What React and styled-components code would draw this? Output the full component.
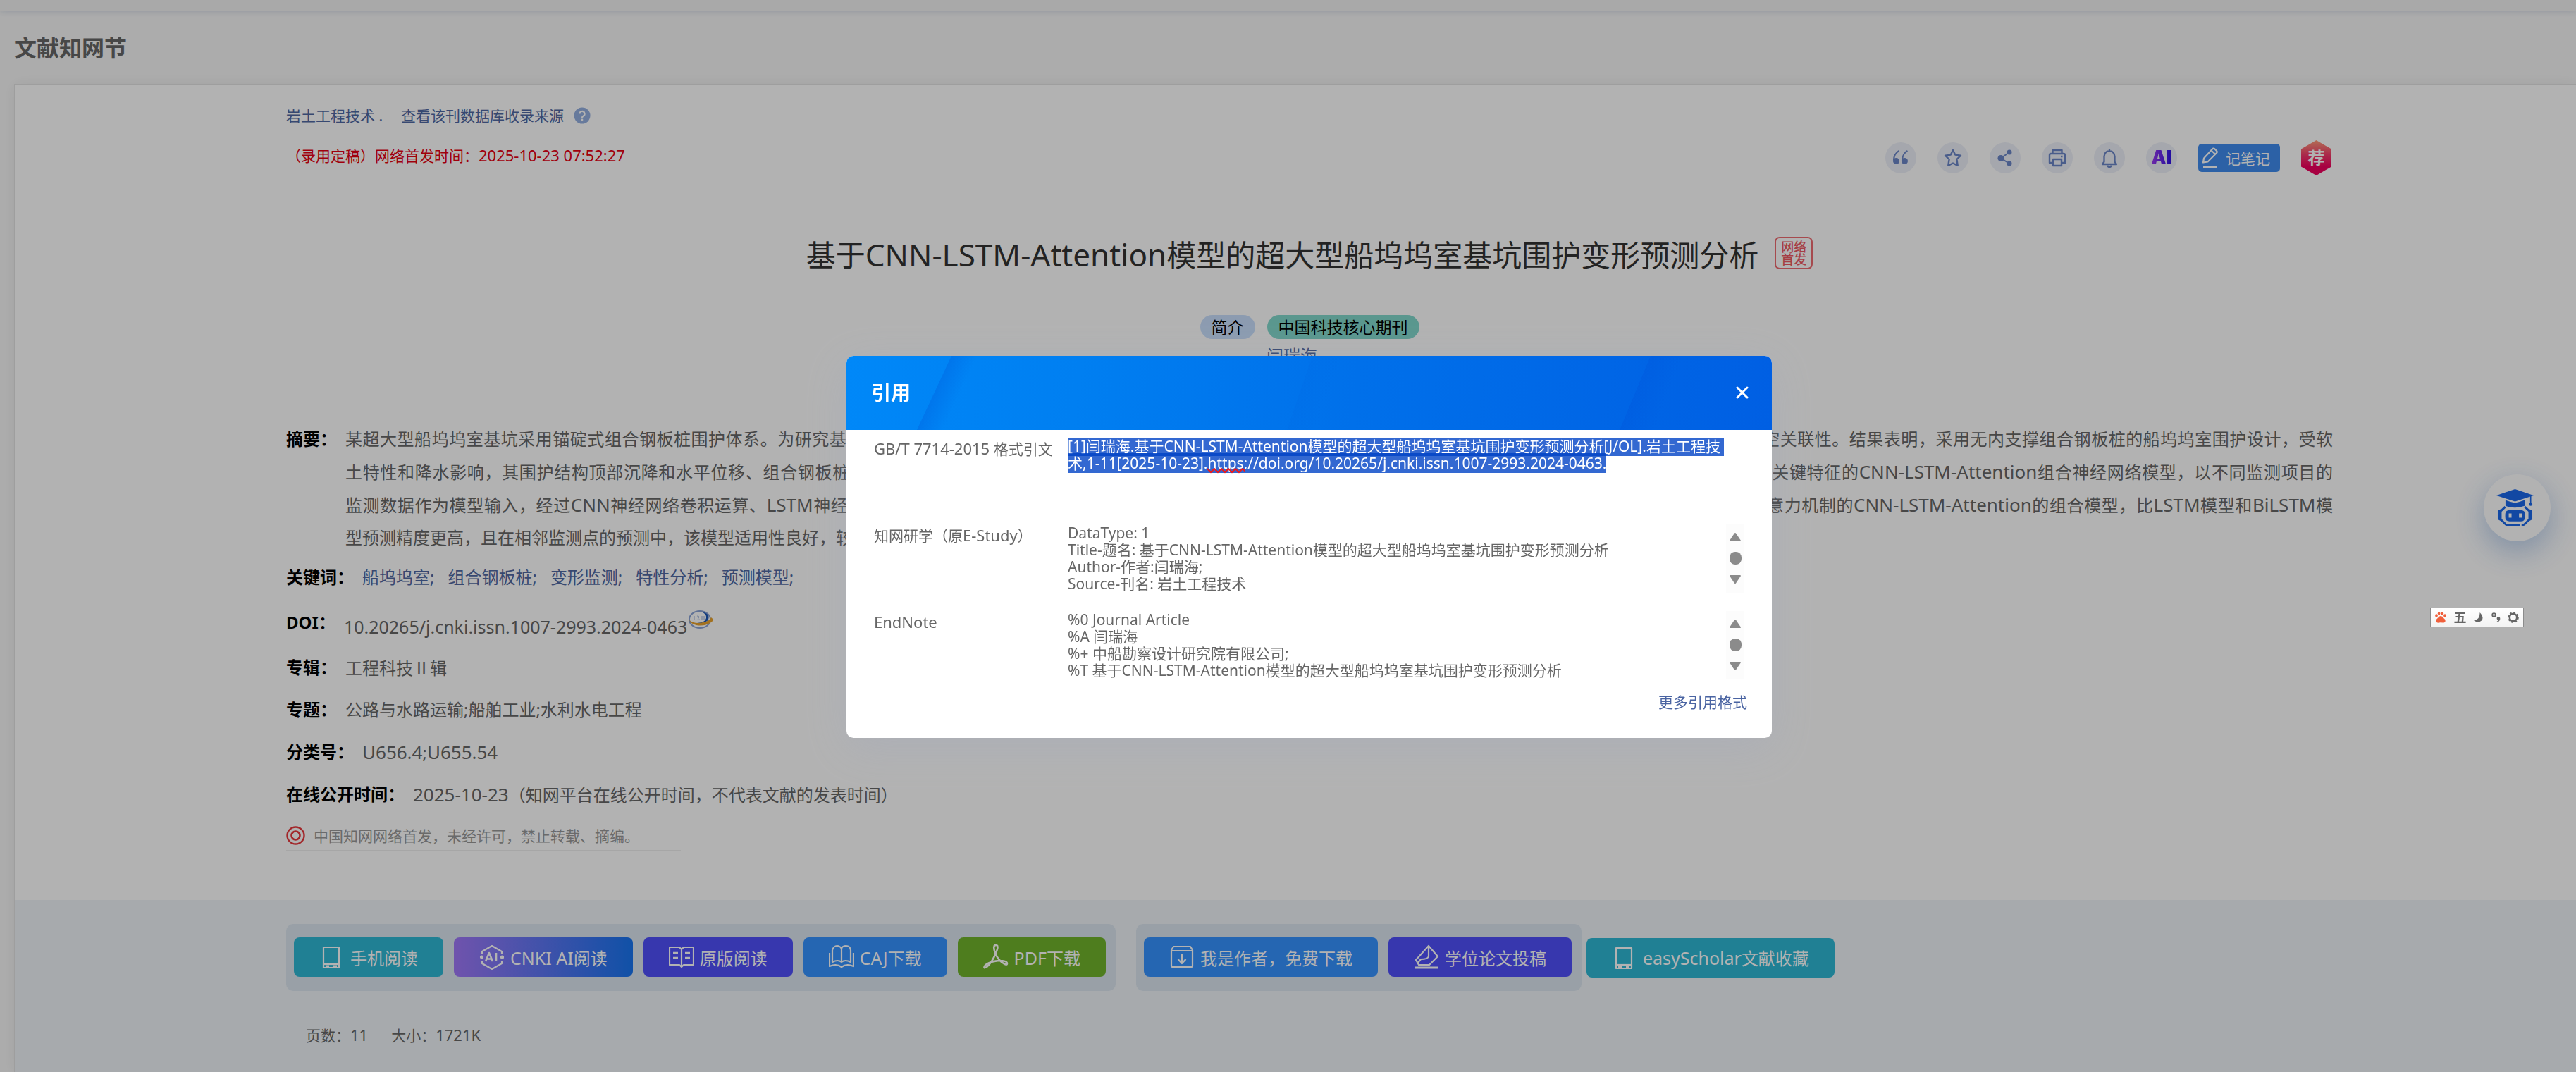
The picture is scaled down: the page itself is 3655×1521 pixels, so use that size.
import React, { useEffect, useRef } from "react";
import styled, { createGlobalStyle } from "styled-components";

const GlobalStyle = createGlobalStyle`
  * { box-sizing: border-box; }
  html, body { margin: 0; padding: 0; background: #f7f7f7; overflow: hidden; }
  body, button, textarea {
    font-family: "Noto Sans", "Noto Sans CJK SC", sans-serif;
  }
  h1, h2, p, dl, dt, dd { margin: 0; font-weight: normal; }
  a { color: inherit; text-decoration: none; }
  button { border: 0; padding: 0; margin: 0; cursor: pointer; background: none; }
  svg { display: block; flex: none; }
`;

const link = "#5068a2";

/* ---------- mixed Chinese / Latin text ---------- */

const Latin = styled.span`
  font-size: ${(p) => p.$size}px;
`;

const Cjk = styled.span`
  font-family: "Noto Sans CJK SC", sans-serif;
`;

function Mixed({ size, children }) {
  return children
    .split(/([A-Za-z0-9][A-Za-z0-9\-./:]*(?: [A-Za-z0-9][A-Za-z0-9\-./:]*)*)/)
    .map((part, i) =>
      i % 2 ? (
        <Latin key={i} $size={size}>
          {part}
        </Latin>
      ) : (
        part
      )
    );
}

/* ---------- page ---------- */

const Page = styled.div`
  min-height: 100vh;
  display: flex;
  flex-direction: column;
  font-size: 24px;
  color: #666;
`;

const TopStrip = styled.div`
  height: 15px;
  background: #f3f3f3;
  box-shadow: 0 1px 10px rgba(130, 150, 180, 0.35);
`;

const PageTitle = styled.h1`
  padding: 33px 20px 31px;
  font-size: 32px;
  line-height: 40px;
  font-weight: bold;
  color: #666;
`;

const Card = styled.main`
  flex: 1;
  display: flex;
  flex-direction: column;
  margin-left: 20px;
  background: #fff;
  border: solid #e3e3e3;
  border-width: 1px 0 0 1px;
  box-shadow: 0 0 20px rgba(0, 0, 0, 0.06);
`;

const Content = styled.div`
  padding: 29px 345px 70px 385px;
`;

const Head = styled.div`
  display: flex;
  justify-content: space-between;
`;

const Source = styled.div`
  display: flex;
  flex-direction: column;
  gap: 26px;
  font-size: 21px;
  line-height: 30px;
`;

const SourceLine = styled.div`
  display: flex;
  align-items: center;
  gap: 14px;
  color: ${link};
`;

const SourceName = styled.a`
  margin-right: 12px;
`;

const Release = styled.p`
  color: #e60012;
`;

const Toolbar = styled.div`
  display: flex;
  align-items: center;
  gap: 30px;
  height: 50px;
  margin-top: 50px;
  padding-right: 2px;
`;

const RoundButton = styled.button`
  width: 44px;
  height: 44px;
  border-radius: 50%;
  background: #edf0f8;
  display: grid;
  place-items: center;
`;

const NoteButton = styled.button`
  display: flex;
  align-items: center;
  gap: 10px;
  height: 40px;
  padding: 0 14px 0 5px;
  border-radius: 5px;
  background: #3f8cee;
  color: #fff;
  font-size: 21px;
`;

const TitleRow = styled.div`
  display: flex;
  justify-content: center;
  align-items: flex-start;
  gap: 23px;
  margin-top: 82px;
`;

const Title = styled.h2`
  font-size: 42px;
  line-height: 60px;
  color: #333;
`;

const Stamp = styled.span`
  width: 54px;
  height: 46px;
  margin-top: 5px;
  padding: 3px 0;
  border: 2px solid #ee6a70;
  border-radius: 7px;
  color: #ee5a62;
  font-size: 18px;
  font-weight: 500;
  line-height: 18px;
  text-align: center;
`;

const Tags = styled.div`
  display: flex;
  justify-content: center;
  gap: 17px;
  margin-top: 55px;
`;

const Tag = styled.span`
  height: 34px;
  padding: 0 16px;
  border-radius: 17px;
  background: ${(p) => p.$tone};
  color: #000;
  font-size: 23px;
  line-height: 34px;
`;

const Author = styled.p`
  margin: 9px 0 80px;
  padding-right: 50px;
  text-align: center;
  line-height: 30px;
  color: ${link};
`;

const Fields = styled.dl`
  display: flex;
  flex-direction: column;
`;

const Field = styled.div`
  display: flex;
  align-items: center;
  gap: 12px;
  min-height: ${(p) => (p.$tall ? 68 : 60)}px;
  line-height: 40px;
`;

const Abstract = styled(Field)`
  align-items: flex-start;
  margin-bottom: 3px;
  line-height: 46px;
`;

const Label = styled.dt`
  flex: none;
  font-weight: bold;
  color: #000;
`;

const Value = styled.dd`
  flex: 1;
`;

const Line = styled.span`
  display: block;
  white-space: nowrap;
  text-align: justify;
  text-align-last: ${(p) => (p.$full ? "justify" : "left")};
`;

const Keywords = styled(Value)`
  display: flex;
  gap: 19px;
  color: ${link};
`;

const DoiValue = styled(Value)`
  display: flex;
  align-items: flex-end;
  height: 44px;
  line-height: 32px;

  svg {
    align-self: flex-start;
  }
`;

const Notice = styled.p`
  display: flex;
  align-items: center;
  gap: 12px;
  width: 560px;
  height: 44px;
  margin-top: 6px;
  border: solid #eee;
  border-width: 1px 0;
  font-size: 21px;
  color: #999;
`;

const Actions = styled.section`
  flex: 1;
  padding: 34px 0 34px 385px;
  background: #eff4f8;
`;

const Groups = styled.div`
  display: flex;
  align-items: center;
`;

const Group = styled.div`
  display: flex;
  gap: 15px;
  padding: 19px 14px 20px 11px;
  margin-right: ${(p) => p.$after}px;
  border-radius: 10px;
  background: #dbe5ef;
`;

const Action = styled.button`
  display: flex;
  align-items: center;
  gap: 8px;
  height: 56px;
  padding: 0 36px;
  border-radius: 8px;
  background: ${(p) => p.$tone};
  color: #fff;
  font-size: 24px;
  white-space: nowrap;
`;

const Stats = styled.p`
  display: flex;
  gap: 33px;
  margin: 47px 0 0 28px;
  font-size: 21px;
  line-height: 30px;
`;

const Assistant = styled.button`
  position: fixed;
  top: 673px;
  right: 36px;
  width: 95px;
  height: 95px;
  border-radius: 50%;
  background: #fff;
  box-shadow: 0 14px 44px rgba(50, 115, 200, 0.36);

  svg {
    margin: 0 0 0 18px;
  }
`;

/* ---------- dialog ---------- */

const Overlay = styled.div`
  position: fixed;
  inset: 0;
  display: flex;
  align-items: center;
  justify-content: center;
  padding: 30px 0 0 60px;
  background: rgba(0, 0, 0, 0.3);
`;

const Dialog = styled.section`
  width: 1313px;
  max-width: 90vw;
  border-radius: 10px;
  overflow: hidden;
  background: #fff;
  box-shadow: 0 14px 60px rgba(150, 162, 195, 0.25);
`;

const DialogHead = styled.header`
  position: relative;
  display: flex;
  align-items: center;
  justify-content: space-between;
  height: 105px;
  padding: 0 33px 0 35px;
  background: linear-gradient(98deg, #0088f8 0%, #007ff1 25%, #0070ea 55%, #005fe3 100%);
  color: #fff;
`;

const Sheen = styled.svg`
  position: absolute;
  inset: 0;
  width: 100%;
  height: 100%;
`;

const DialogTitle = styled.h2`
  position: relative;
  font-size: 28px;
  font-weight: bold;
  line-height: 40px;
`;

const CloseButton = styled.button`
  position: relative;
`;

const DialogBody = styled.div`
  display: flex;
  flex-direction: column;
  gap: 26px;
  padding: 11px 39px 0;
`;

const CiteRow = styled.div`
  position: relative;
  display: grid;
  grid-template-columns: 275px 1fr 26px;
  height: 97px;
`;

const CiteLabel = styled.label`
  font-size: 21px;
  line-height: 30px;
  color: #666;
`;

const CiteText = styled.textarea`
  display: block;
  width: 100%;
  height: 96px;
  padding: 0;
  border: 0;
  outline: 0;
  resize: none;
  overflow: hidden;
  background: transparent;
  color: #666;
  font-size: 21px;
  line-height: 24px;

  &::selection {
    background: rgba(0, 66, 197, 0.8);
    color: #fff;
  }
`;

const Squiggle = styled.svg`
  position: absolute;
  left: 473px;
  top: 43px;
`;

const Rail = styled.div`
  display: flex;
  flex-direction: column;
  align-items: center;
  justify-content: center;
  gap: 14px;
  background: #fcfcfc;
`;

const RailButton = styled.button`
  width: 18px;
  height: 14px;
`;

const Thumb = styled.span`
  width: 17px;
  height: 18px;
  border-radius: 8px;
  background: #8b8b8b;
`;

const DialogFoot = styled.footer`
  display: flex;
  justify-content: flex-end;
  padding: 17px 35px 36px;
  font-size: 21px;
  line-height: 30px;
  color: #4a64a2;
`;

/* ---------- input method bar ---------- */

const ImeBar = styled.div`
  position: fixed;
  top: 862px;
  right: 74px;
  display: flex;
  align-items: center;
  justify-content: space-between;
  width: 133px;
  height: 28px;
  padding: 0 6px;
  border: 1px solid #8c8c8c;
  background: linear-gradient(#fff, #f3f3f3);
  color: #666;
  font-size: 18px;
  font-weight: bold;
  line-height: 24px;
`;

/* ---------- icons ---------- */

const blue = "#6b86c8";

const HelpIcon = () => (
  <svg width="24" height="24" viewBox="0 0 24 24">
    <circle cx="12" cy="12" r="11.5" fill="#94afe0" />
    <path d="M8.5 9.5a3.5 3.5 0 1 1 5.2 3c-1.2.7-1.7 1.2-1.7 2.4" fill="none" stroke="#fff" strokeWidth="2.2" />
    <circle cx="12" cy="18" r="1.4" fill="#fff" />
  </svg>
);

const QuoteIcon = () => (
  <svg width="24" height="24" viewBox="0 0 24 20">
    <path d="M9.500 0C5.500 2 2 7 2 13.500" fill="none" stroke={blue} strokeWidth="2.200" />
    <circle cx="5.500" cy="14.500" r="4.500" fill={blue} />
    <path d="M21.500 0C17.500 2 14 7 14 13.500" fill="none" stroke={blue} strokeWidth="2.200" />
    <circle cx="17.500" cy="14.500" r="4.500" fill={blue} />
  </svg>
);

const StarIcon = () => (
  <svg width="26" height="26" viewBox="0 0 26 26" fill="none" stroke={blue} strokeWidth="2.400" strokeLinejoin="round">
    <path d="M13 2l3.200 6.600 7.800 1.100-5.600 5.300 1.300 8.800L13 20.500l-6.700 3.300L7.600 15 2 9.700l7.800-1.100z" />
  </svg>
);

const ShareIcon = () => (
  <svg width="22" height="24" viewBox="0 0 22 24" fill={blue}>
    <path d="M17 4L5 12.500 17 20" fill="none" stroke={blue} strokeWidth="2" />
    <circle cx="17" cy="4" r="3.500" />
    <circle cx="5" cy="12.500" r="4.500" />
    <circle cx="17" cy="20" r="3.500" />
  </svg>
);

const PrintIcon = () => (
  <svg width="26" height="26" viewBox="0 0 26 26" fill="none" stroke={blue} strokeWidth="2.400" strokeLinejoin="round">
    <path d="M6.500 7V2h13v5" />
    <path d="M6 20H2V9q0-2 2-2h18q2 0 2 2v11h-4" />
    <path d="M7 15h12v9H7z" />
    <path d="M18 11h2.500" />
  </svg>
);

const BellIcon = () => (
  <svg width="24" height="28" viewBox="0 0 24 28" fill="none" stroke={blue} strokeWidth="2.300" strokeLinejoin="round">
    <path d="M12 1v3M4.500 19.500V12a7.500 8 0 0 1 15 0v7.500l2.500 3.500H2z" />
    <path d="M9.500 24.500a2.500 2.500 0 0 0 5 0" />
  </svg>
);

const AiMark = styled.span`
  font-size: 27px;
  line-height: 28px;
  font-weight: 900;
  font-family: Inter, "Noto Sans", sans-serif;
  background: linear-gradient(90deg, #a03cf0, #2a10e6);
  background-clip: text;
  color: transparent;
`;

const PencilIcon = () => (
  <svg width="24" height="30" viewBox="0 0 24 30" fill="none" stroke="#fff" strokeWidth="2.200" strokeLinejoin="round">
    <path d="M2 21.500l1-6L15 2.500q1.500-1.500 3.500 0l2.500 2.500q1.500 1.500 0 3L8.500 20.500z" />
    <path d="M14 5l5.500 5" />
    <path d="M2 27.500h20" strokeWidth="3" />
  </svg>
);

const HexBadge = styled.button`
  width: 43px;
  height: 50px;
  clip-path: polygon(50% 0, 100% 25%, 100% 75%, 50% 100%, 0 75%, 0 25%);
  background: linear-gradient(#ff9d7a, #f43f6b 40%, #f0005e 75%);
  color: #fff;
  font-size: 24px;
  font-weight: bold;
  line-height: 48px;
`;

const DoiIcon = () => (
  <svg width="38" height="36" viewBox="0 0 38 36" fill="none">
    <ellipse cx="18" cy="18" rx="15" ry="12" stroke="#8aa3d6" strokeWidth="2" />
    <path d="M20 7q13 2 10 11-3 6-16 5 12-1 13-7 1-6-7-9z" fill="#1d57b5" />
    <path d="M3 19q8 6 20 3 9-2 11-7 6 4-2 8-8 5-19 3-8-2-10-7z" fill="#e8a32e" />
    <path d="M10 13v5M14 13q4 0 2 3t2 2M21 13v5M24 13v5" stroke="#a9bbe0" strokeWidth="1.200" />
  </svg>
);

const RingIcon = () => (
  <svg width="27" height="27" viewBox="0 0 27 27" fill="none" stroke="#e8383d">
    <circle cx="13.500" cy="13.500" r="12" strokeWidth="2.400" />
    <circle cx="13.500" cy="13.500" r="6" strokeWidth="2.600" />
  </svg>
);

const actionIcon = { width: 36, height: 36, viewBox: "0 0 36 36", fill: "none", stroke: "#fff", strokeWidth: 2.2, strokeLinejoin: "round" };

const PhoneIcon = () => (
  <svg {...actionIcon}>
    <path d="M6 4h22v29H6z" />
    <path d="M6 28h22" />
    <path d="M9 31h5M20 31h5" strokeWidth="3" />
  </svg>
);

const AiHexIcon = () => (
  <svg {...actionIcon}>
    <path d="M4 14v-4L18 2l14 8v4M4 23v4l14 8 14-8v-4" />
    <circle cx="3.500" cy="18" r="1.500" fill="#fff" />
    <circle cx="32.500" cy="18" r="1.500" fill="#fff" />
    <path d="M9 24l5-12 5 12M11 20.500h6M24 12v12" strokeWidth="2.600" />
  </svg>
);

const ReadIcon = () => (
  <svg {...actionIcon}>
    <path d="M18 7L15 4H1v25h14l3 3 3-3h14V4H21zM18 7v25" />
    <path d="M6 12h7M6 19h7M23 12h7M23 19h7" strokeWidth="2.600" />
  </svg>
);

const CajIcon = () => (
  <svg {...actionIcon}>
    <path d="M18 6q-2-4-6.500-4T5 8v17q8-4 13 0 5-4 13 0V8q-1-6-6.500-6T18 6zM18 6v19" />
    <path d="M1 12v19q10-4 17 1 7-5 17-1V12" />
  </svg>
);

const PdfIcon = () => (
  <svg {...actionIcon} strokeWidth="2.600">
    <path d="M17 12q-4-11 1-11t0 11Q13 25 5 32q-5 3-3-1 3-6 20-8 12 0 12 4t-8-2Q20 20 17 12z" />
  </svg>
);

const AuthorIcon = () => (
  <svg {...actionIcon}>
    <path d="M3 8l3-5h24l3 5v22q0 2-2 2H5q-2 0-2-2zM3 9h30" />
    <path d="M18 13v13M12.500 21l5.500 6 5.500-6" />
  </svg>
);

const SubmitIcon = () => (
  <svg {...actionIcon}>
    <path d="M7 29L3 22 21 2l13 15-12 12z" />
    <path d="M21 3v14q-1 4-11 4l-5 6" />
    <path d="M1 33h34" strokeWidth="3" />
  </svg>
);

const RobotIcon = () => (
  <svg width="53" height="53" viewBox="0 0 160 160" fill="#1a68ea">
    <path d="M80 0l80 27-80 26L0 27z" />
    <path d="M39 47q20 8 41 12 21-4 41-12v25q-41 14-82 0z" />
    <path d="M147 30v32" stroke="#1a68ea" strokeWidth="5" />
    <circle cx="147" cy="65" r="7" />
    <path d="M38 76L18 95v34l22 22q4 4 10 4h50M122 76l20 19v34l-22 22q-4 4-12 4" fill="none" stroke="#1a68ea" strokeWidth="9" />
    <path d="M6 92l12-6v50l-12-6zM154 92l-12-6v50l12-6z" />
    <path fillRule="evenodd" d="M57 90h47q19 0 19 19v10q0 19-19 19H57q-19 0-19-19v-10q0-19 19-19zM53 104v18h12v-18zM97 104v18h12v-18z" />
  </svg>
);

const PawIcon = () => (
  <svg width="16" height="16" viewBox="0 0 16 16" fill="#f0603c">
    <ellipse cx="2" cy="5.500" rx="1.800" ry="2.300" />
    <ellipse cx="5.600" cy="2.300" rx="1.800" ry="2.300" />
    <ellipse cx="10.300" cy="2.300" rx="1.800" ry="2.300" />
    <ellipse cx="14" cy="5.500" rx="1.800" ry="2.300" />
    <path d="M8 6q2.500 0 4 2.800 3 2.200 2.700 4.400Q14 16 11 15.600q-3-.6-6 0Q2 16 1.300 13.200 1 11 4 8.800 5.500 6 8 6z" />
  </svg>
);

const MoonIcon = () => (
  <svg width="14" height="14" viewBox="0 0 14 14" fill="#666">
    <path d="M8.500 0Q15 7 11 11.500 6.500 15.500 0 11.500 9 10.500 8.500 0z" />
  </svg>
);

const PunctIcon = () => (
  <svg width="13" height="14" viewBox="0 0 13 14">
    <circle cx="3.500" cy="3.500" r="2.300" fill="none" stroke="#666" strokeWidth="1.800" />
    <path d="M9.500 6a2.600 2.600 0 0 1 2.800 3q0 3-4 5l-.8-1q1.800-1 1.800-2.200A2.500 2.500 0 0 1 9.500 6z" fill="#666" />
  </svg>
);

const GearIcon = () => (
  <svg width="16" height="16" viewBox="0 0 16 16" fill="none" stroke="#666">
    <circle cx="8" cy="8" r="5.200" strokeWidth="2.600" />
    <circle cx="8" cy="8" r="6.800" strokeWidth="2" strokeDasharray="2.700 2.640" />
  </svg>
);

const CloseIcon = () => (
  <svg width="18" height="18" viewBox="0 0 18 18" stroke="#fff" strokeWidth="3" strokeLinecap="round">
    <path d="M2 2l14 14M16 2L2 16" />
  </svg>
);

const Triangle = ({ down }) => (
  <svg width="18" height="14" viewBox="0 0 18 14" fill="#8b8b8b">
    <path d={down ? "M2 1h14q1.500 0 .7 1.500L10 12.500q-1 1-2 0L1.300 2.500Q.5 1 2 1z" : "M2 13h14q1.500 0 .7-1.500L10 1.500q-1-1-2 0L1.300 11.500Q.5 13 2 13z"} />
  </svg>
);

/* ---------- data ---------- */

const TITLE = "基于CNN-LSTM-Attention模型的超大型船坞坞室基坑围护变形预测分析";

const ABSTRACT = [
  "某超大型船坞坞室基坑采用锚碇式组合钢板桩围护体系。为研究基坑开挖过程中围护结构的变形规律，结合现场监测数据，对围护结构的沉降、水平位移和桩身变形进行分析，并研究其时空关联性。结果表明，采用无内支撑组合钢板桩的船坞坞室围护设计，受软",
  "土特性和降水影响，其围护结构顶部沉降和水平位移、组合钢板桩的桩身变形均随开挖深度增加而逐渐增大，并在底板浇筑完成后趋于稳定。基于监测数据的时空特征，提出能够有效提取关键特征的CNN-LSTM-Attention组合神经网络模型，以不同监测项目的",
  "监测数据作为模型输入，经过CNN神经网络卷积运算、LSTM神经网络时序特征提取以及注意力机制权重分配，对船坞坞室基坑围护结构变形进行预测。研究表明，在预测精度方面引入注意力机制的CNN-LSTM-Attention的组合模型，比LSTM模型和BiLSTM模",
  "型预测精度更高，且在相邻监测点的预测中，该模型适用性良好，较为稳定。",
];

const KEYWORDS = ["船坞坞室;", "组合钢板桩;", "变形监测;", "特性分析;", "预测模型;"];

const TOOLS = [
  ["引用", QuoteIcon],
  ["收藏", StarIcon],
  ["分享", ShareIcon],
  ["打印", PrintIcon],
  ["订阅", BellIcon],
];

const READ_ACTIONS = [
  ["手机阅读", PhoneIcon, "#2fb8d5"],
  ["CNKI AI阅读", AiHexIcon, "linear-gradient(90deg, #a078f8, #1874f0)"],
  ["原版阅读", ReadIcon, "#4f50fa"],
  ["CAJ下载", CajIcon, "#3693ff"],
  ["PDF下载", PdfIcon, "#70b42c"],
];

const AUTHOR_ACTIONS = [
  ["我是作者，免费下载", AuthorIcon, "#3693ff"],
  ["学位论文投稿", SubmitIcon, "#4f50fa"],
];

const GBT = `[1]闫瑞海.${TITLE}[J/OL].岩土工程技术,1-11[2025-10-23].https://doi.org/10.20265/j.cnki.issn.1007-2993.2024-0463.`;

const ESTUDY = `DataType: 1\nTitle-题名: ${TITLE}\nAuthor-作者:闫瑞海;\nSource-刊名: 岩土工程技术`;

const ENDNOTE = `%0 Journal Article\n%A 闫瑞海\n%+ 中船勘察设计研究院有限公司;\n%T ${TITLE}`;

/* ---------- parts ---------- */

function ActionButton({ item: [text, Icon, tone] }) {
  return (
    <Action $tone={tone}>
      <Icon />
      <span>
        <Mixed size={25}>{text}</Mixed>
      </span>
    </Action>
  );
}

function PlainField({ label, children }) {
  return (
    <Field>
      <Label>{label}</Label>
      <Value>
        <Mixed size={26}>{children}</Mixed>
      </Value>
    </Field>
  );
}

function ScrollRail() {
  return (
    <Rail>
      <RailButton aria-label="向上滚动">
        <Triangle />
      </RailButton>
      <Thumb />
      <RailButton aria-label="向下滚动">
        <Triangle down />
      </RailButton>
    </Rail>
  );
}

function CiteDialog() {
  const first = useRef(null);

  useEffect(() => {
    first.current.focus({ preventScroll: true });
    first.current.select();
  }, []);

  return (
    <Overlay>
      <Dialog role="dialog" aria-labelledby="cite-title">
        <DialogHead>
          <Sheen viewBox="0 0 1313 105" preserveAspectRatio="none">
            <defs>
              <linearGradient id="edge" gradientUnits="userSpaceOnUse" x1="125" y1="52" x2="155" y2="66">
                <stop offset="0" stopColor="#0064e0" stopOpacity="0.45" />
                <stop offset="1" stopColor="#0064e0" stopOpacity="0" />
              </linearGradient>
              <linearGradient id="edge2" gradientUnits="userSpaceOnUse" x1="1118" y1="52" x2="1160" y2="68">
                <stop offset="0" stopColor="#0050d8" stopOpacity="0.28" />
                <stop offset="1" stopColor="#0050d8" stopOpacity="0" />
              </linearGradient>
              <linearGradient id="edge3" gradientUnits="userSpaceOnUse" x1="643" y1="52" x2="680" y2="65">
                <stop offset="0" stopColor="#0064e0" stopOpacity="0.16" />
                <stop offset="1" stopColor="#0064e0" stopOpacity="0" />
              </linearGradient>
            </defs>
            <path d="M149 0H249L200 105H100z" fill="url(#edge)" />
            <path d="M661 0H761L725 105H625z" fill="url(#edge3)" />
            <path d="M1141 0H1241L1197 105H1097z" fill="url(#edge2)" />
          </Sheen>
          <DialogTitle id="cite-title">引用</DialogTitle>
          <CloseButton aria-label="关闭">
            <CloseIcon />
          </CloseButton>
        </DialogHead>
        <DialogBody>
          <CiteRow>
            <CiteLabel htmlFor="gbt">
              <Mixed size={22}>GB/T 7714-2015 格式引文</Mixed>
            </CiteLabel>
            <CiteText id="gbt" ref={first} readOnly spellCheck={false} defaultValue={GBT} />
            <Squiggle width="54" height="8" viewBox="0 0 54 8" fill="none" stroke="#f01818" strokeWidth="2">
              <path d="M0 1l5 5 5-5 5 5 5-5 5 5 5-5 5 5 5-5 5 5 5-5 4 4" />
            </Squiggle>
          </CiteRow>
          <CiteRow>
            <CiteLabel htmlFor="estudy">
              <Mixed size={22}>知网研学（原E-Study）</Mixed>
            </CiteLabel>
            <CiteText id="estudy" readOnly spellCheck={false} defaultValue={ESTUDY} />
            <ScrollRail />
          </CiteRow>
          <CiteRow>
            <CiteLabel htmlFor="endnote">
              <Mixed size={22}>EndNote</Mixed>
            </CiteLabel>
            <CiteText id="endnote" readOnly spellCheck={false} defaultValue={ENDNOTE} />
            <ScrollRail />
          </CiteRow>
        </DialogBody>
        <DialogFoot>
          <a href="#more">更多引用格式</a>
        </DialogFoot>
      </Dialog>
    </Overlay>
  );
}

export default function App() {
  return (
    <>
      <GlobalStyle />
      <Page>
        <TopStrip />
        <PageTitle>文献知网节</PageTitle>
        <Card>
          <Content>
            <Head>
              <Source>
                <SourceLine>
                  <SourceName href="#journal">岩土工程技术 .</SourceName>
                  <a href="#sources">查看该刊数据库收录来源</a>
                  <HelpIcon />
                </SourceLine>
                <Release>
                  <Mixed size={22}>（录用定稿）网络首发时间：2025-10-23 07:52:27</Mixed>
                </Release>
              </Source>
              <Toolbar>
                {TOOLS.map(([name, Icon]) => (
                  <RoundButton key={name} aria-label={name}>
                    <Icon />
                  </RoundButton>
                ))}
                <RoundButton>
                  <AiMark>AI</AiMark>
                </RoundButton>
                <NoteButton>
                  <PencilIcon />
                  记笔记
                </NoteButton>
                <HexBadge>荐</HexBadge>
              </Toolbar>
            </Head>

            <TitleRow>
              <Title>
                <Mixed size={44}>{TITLE}</Mixed>
              </Title>
              <Stamp>
                网络
                <br />
                首发
              </Stamp>
            </TitleRow>
            <Tags>
              <Tag $tone="#c9dffc">简介</Tag>
              <Tag $tone="#82d8cc">中国科技核心期刊</Tag>
            </Tags>
            <Author>
              <a href="#author">闫瑞海</a>
            </Author>

            <Fields>
              <Abstract>
                <Label>摘要：</Label>
                <Value>
                  {ABSTRACT.map((line, i) => (
                    <Line key={i} $full={i < ABSTRACT.length - 1}>
                      <Mixed size={26}>{line}</Mixed>
                    </Line>
                  ))}
                </Value>
              </Abstract>
              <Field>
                <Label>关键词：</Label>
                <Keywords>
                  {KEYWORDS.map((word) => (
                    <a key={word} href="#keyword">
                      {word}
                    </a>
                  ))}
                </Keywords>
              </Field>
              <Field $tall>
                <Label>DOI：</Label>
                <DoiValue>
                  <Latin $size={25}>10.20265/j.cnki.issn.1007-2993.2024-0463</Latin>
                  <DoiIcon />
                </DoiValue>
              </Field>
              <Field>
                <Label>专辑：</Label>
                <Value>
                  <Cjk>工程科技Ⅱ辑</Cjk>
                </Value>
              </Field>
              <PlainField label="专题：">公路与水路运输;船舶工业;水利水电工程</PlainField>
              <PlainField label="分类号：">U656.4;U655.54</PlainField>
              <PlainField label="在线公开时间：">2025-10-23（知网平台在线公开时间，不代表文献的发表时间）</PlainField>
            </Fields>
            <Notice>
              <RingIcon />
              中国知网网络首发，未经许可，禁止转载、摘编。
            </Notice>
          </Content>

          <Actions>
            <Groups>
              <Group $after={29}>
                {READ_ACTIONS.map((item) => (
                  <ActionButton key={item[0]} item={item} />
                ))}
              </Group>
              <Group $after={7}>
                {AUTHOR_ACTIONS.map((item) => (
                  <ActionButton key={item[0]} item={item} />
                ))}
              </Group>
              <ActionButton item={["easyScholar文献收藏", PhoneIcon, "#2fb8d5"]} />
            </Groups>
            <Stats>
              <span>
                页数：<Latin $size={22}>11</Latin>
              </span>
              <span>
                大小：<Latin $size={22}>1721K</Latin>
              </span>
            </Stats>
          </Actions>
        </Card>
      </Page>
      <Assistant aria-label="智能助手">
        <RobotIcon />
      </Assistant>
      <CiteDialog />
      <ImeBar>
        <PawIcon />
        <span>五</span>
        <MoonIcon />
        <PunctIcon />
        <GearIcon />
      </ImeBar>
    </>
  );
}
